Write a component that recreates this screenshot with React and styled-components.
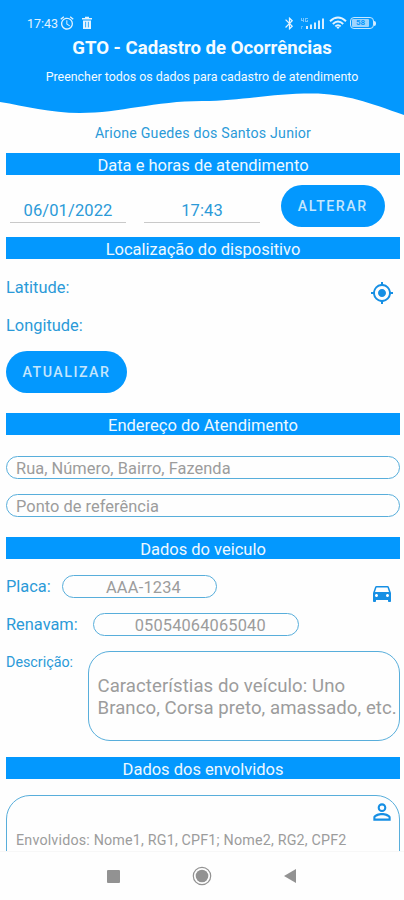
import React from 'react';
import styled, { createGlobalStyle } from 'styled-components';
import {
  MdAlarm,
  MdBluetooth,
  MdDirectionsCar,
  MdMyLocation,
  MdPersonOutline,
} from 'react-icons/md';

const blue = '#0398fe';
const textBlue = '#2b9ad8';
const outline = '#58aedb';
const hint = '#9c9c9c';

const GlobalStyle = createGlobalStyle`
  * {
    box-sizing: border-box;
  }
  body {
    margin: 0;
    background: #fefefe;
    font-family: Roboto, sans-serif;
  }
`;

const Screen = styled.div`
  display: flex;
  flex-direction: column;
  width: 404px;
  height: 900px;
  overflow: hidden;
  background: #fefefe;
`;

const Header = styled.header`
  height: 92px;
  flex: none;
  padding-top: 14px;
  background: ${blue};
  color: #f4fbff;
  text-align: center;
`;

const StatusBar = styled.div`
  display: flex;
  align-items: center;
  justify-content: space-between;
  height: 18px;
  padding: 0 28px 0 27px;
  color: #e3f3ff;
`;

const StatusGroup = styled.div`
  display: flex;
  align-items: center;
  gap: ${(props) => props.$gap}px;
`;

const Clock = styled.span`
  margin-right: -2px;
  font-size: 12.5px;
  font-weight: 400;
`;

const Title = styled.h1`
  margin: 5px 0 0;
  font-size: 18.6px;
  line-height: 22px;
  font-weight: 700;
`;

const Subtitle = styled.p`
  margin: 10px 0 0;
  font-size: 12.4px;
  line-height: 16px;
`;

const Wave = styled.svg`
  display: block;
  flex: none;
  width: 404px;
  height: 24px;
`;

const Form = styled.main`
  flex: 1;
  min-height: 0;
  overflow: hidden;
  padding: 8px 4px 0 6px;
`;

const UserName = styled.p`
  margin: 0 0 11px;
  color: ${textBlue};
  font-size: 14.2px;
  line-height: 18px;
  letter-spacing: 0.2px;
  text-align: center;
`;

const SectionTitle = styled.h2`
  height: 22px;
  margin: 0;
  background: ${blue};
  color: #eef8ff;
  font-size: 16.5px;
  line-height: 25px;
  font-weight: 400;
  text-align: center;
`;

const DateRow = styled.div`
  display: flex;
  align-items: flex-start;
  height: 62px;
  padding: 10px 0 0 4px;
`;

const DateField = styled.div`
  width: 116px;
  height: 38px;
  margin-right: ${(props) => props.$after}px;
  padding-top: 16px;
  border-bottom: 1px solid #c9c9c9;
  color: ${textBlue};
  font-size: 16.5px;
  line-height: 20px;
  letter-spacing: 0.1px;
  text-align: center;
`;

const Button = styled.button`
  width: ${(props) => props.$width}px;
  height: 41.5px;
  padding: 1px 0 0;
  border: 0;
  border-radius: 21px;
  background: ${blue};
  color: #c4e6fd;
  font-family: inherit;
  font-size: 14.2px;
  font-weight: 500;
  letter-spacing: 1.5px;
`;

const Location = styled.div`
  display: flex;
  justify-content: space-between;
  height: 154px;
  padding: 18px 6px 0 0;
`;

const Coordinates = styled.div`
  display: flex;
  flex-direction: column;
  align-items: flex-start;
`;

const Label = styled.label`
  width: ${(props) => (props.$width ? `${props.$width}px` : 'auto')};
  flex: none;
  color: ${textBlue};
  font-size: ${(props) => props.$size || 16.4}px;
  line-height: 22px;
`;

const Coordinate = styled(Label)`
  height: 38px;
`;

const UpdateButton = styled(Button)`
  margin-top: -2px;
`;

const IconSlot = styled.span`
  display: flex;
  align-self: flex-start;
  margin-top: ${(props) => props.$top}px;
  color: #168fe4;
`;

const AddressFields = styled.div`
  display: flex;
  flex-direction: column;
  gap: 15px;
  height: 102px;
  padding-top: 21px;
`;

const Input = styled.input`
  display: block;
  width: ${(props) => (props.$width ? `${props.$width}px` : '100%')};
  height: 23px;
  padding: 1px 0 0 9px;
  border: 1px solid ${outline};
  border-radius: 12px;
  background: transparent;
  font-family: inherit;
  font-size: 16.4px;
  letter-spacing: ${(props) => props.$spacing || 0.04}px;
  text-align: ${(props) => props.$align || 'left'};
  outline: none;

  &::placeholder {
    color: ${hint};
    opacity: 1;
  }
`;

const VehicleTop = styled.div`
  display: flex;
  justify-content: space-between;
  height: 92px;
  padding: 16px 6px 0 0;
`;

const VehicleFields = styled.div`
  display: flex;
  flex-direction: column;
  gap: 15px;
`;

const FieldRow = styled.div`
  display: flex;
  align-items: center;
  height: 23px;
`;

const DescriptionRow = styled.div`
  display: flex;
  align-items: flex-start;
  height: 106px;
`;

const Description = styled.div`
  flex: 1;
  height: 90px;
  padding: 24px 0 0 9px;
  border: 1px solid ${outline};
  border-radius: 22px;
  color: ${hint};
  font-size: 18.6px;
  line-height: 21.5px;
  letter-spacing: 0.07px;
  white-space: pre;
`;

const People = styled.div`
  display: flex;
  justify-content: space-between;
  height: 100px;
  margin-top: 16px;
  padding: 0 4px 0 9px;
  border: 1px solid ${outline};
  border-radius: 24px;
`;

const PeopleHint = styled.p`
  margin: 35px 0 0;
  color: ${hint};
  font-size: 14.3px;
  line-height: 18px;
  letter-spacing: 0.18px;
`;

const NavBar = styled.nav`
  display: flex;
  flex: none;
  align-items: center;
  justify-content: space-between;
  height: 49px;
  padding: 0 108px 0 107px;
  border-top: 1px solid #f7f7f7;
`;

const Trash = styled.svg`
  margin-left: 3px;
`;

const TrashIcon = () => (
  <Trash width="12" height="14" viewBox="0 0 12 14" fill="#e3f3ff">
    <path d="M1 2h3V.8h4V2h3v1.6H1zM2 4.4h8V13H2z" />
    <path d="M4.6 5.8v5.6M7.4 5.8v5.6" stroke={blue} strokeWidth="0.8" />
  </Trash>
);

const SignalIcon = () => (
  <svg width="25" height="14" viewBox="0 0 25 14" fill="#d6edff">
    <path d="M1 2h1v2h1V2h1v4H3V5H1zM5 2h3v1H6v2h1V4h1v2H5z" opacity=".55" />
    <path d="M1 10h2v1H2v2H1z" opacity=".4" />
    <path d="M6 10h2v3H6zM10 8.5h2V13h-2zM14 6.5h2V13h-2zM18 4.5h2V13h-2zM22 2.5h2V13h-2z" />
  </svg>
);

const WifiIcon = () => (
  <svg width="18" height="14" viewBox="0 0 18 14" fill="none" stroke="#e3f3ff" strokeWidth="1.9">
    <path d="M1 5.2Q9-2.4 17 5.2M3.8 8Q9 3.2 14.2 8M6.3 10.4Q9 7.9 11.7 10.4" />
    <path d="M7.4 11.3 9 13l1.6-1.7Q9 10 7.4 11.3" fill="#e3f3ff" stroke="none" />
  </svg>
);

const Battery = styled.span`
  display: flex;
  align-items: center;

  &::after {
    content: '';
    width: 2px;
    height: 5px;
    border-radius: 0 2px 2px 0;
    background: #d6edff;
  }
`;

const BatteryBody = styled.span`
  width: 24px;
  height: 12px;
  padding: 1px;
  border: 1px solid #c9e8ff;
  border-radius: 4px;
`;

const BatteryLevel = styled.span`
  display: block;
  width: 17px;
  height: 8px;
  border-radius: 1px;
  background: #9dd4fd;
  color: ${blue};
  font-size: 8px;
  line-height: 8.5px;
  font-weight: 700;
  text-align: center;
`;

const App = () => (
  <>
    <GlobalStyle />
    <Screen>
      <Header>
        <StatusBar>
          <StatusGroup $gap={3}>
            <Clock>17:43</Clock>
            <MdAlarm size={16} />
            <TrashIcon />
          </StatusGroup>
          <StatusGroup $gap={3.5}>
            <MdBluetooth size={15} />
            <SignalIcon />
            <WifiIcon />
            <Battery>
              <BatteryBody>
                <BatteryLevel>58</BatteryLevel>
              </BatteryBody>
            </Battery>
          </StatusGroup>
        </StatusBar>
        <Title>GTO - Cadastro de Ocorrências</Title>
        <Subtitle>Preencher todos os dados para cadastro de atendimento</Subtitle>
      </Header>
      <Wave viewBox="0 0 404 24">
        <path
          d="M0 0H404V23C370 11 345 1.5 312 1.5C270 1.5 242 9 202 9C155 9 120 21 80 21C50 21 25 14 0 10Z"
          fill={blue}
        />
      </Wave>
      <Form>
        <UserName>Arione Guedes dos Santos Junior</UserName>
        <SectionTitle>Data e horas de atendimento</SectionTitle>
        <DateRow>
          <DateField $after={18}>06/01/2022</DateField>
          <DateField $after={21}>17:43</DateField>
          <Button $width={103.5}>ALTERAR</Button>
        </DateRow>
        <SectionTitle>Localização do dispositivo</SectionTitle>
        <Location>
          <Coordinates>
            <Coordinate>Latitude:</Coordinate>
            <Coordinate>Longitude:</Coordinate>
            <UpdateButton $width={121}>ATUALIZAR</UpdateButton>
          </Coordinates>
          <IconSlot $top={4}>
            <MdMyLocation size={24} />
          </IconSlot>
        </Location>
        <SectionTitle>Endereço do Atendimento</SectionTitle>
        <AddressFields>
          <Input placeholder="Rua, Número, Bairro, Fazenda" />
          <Input placeholder="Ponto de referência" />
        </AddressFields>
        <SectionTitle>Dados do veiculo</SectionTitle>
        <VehicleTop>
          <VehicleFields>
            <FieldRow>
              <Label $width={55.5}>Placa:</Label>
              <Input $width={155} $align="center" $spacing={0.2} placeholder="AAA-1234" />
            </FieldRow>
            <FieldRow>
              <Label $width={86.5}>Renavam:</Label>
              <Input $width={206.5} $align="center" $spacing={0.15} placeholder="05054064065040" />
            </FieldRow>
          </VehicleFields>
          <IconSlot $top={6}>
            <MdDirectionsCar size={24} />
          </IconSlot>
        </VehicleTop>
        <DescriptionRow>
          <Label $width={81.5} $size={14.3}>Descrição:</Label>
          <Description>{'Característias do veículo: Uno\nBranco, Corsa preto, amassado, etc.'}</Description>
        </DescriptionRow>
        <SectionTitle>Dados dos envolvidos</SectionTitle>
        <People>
          <PeopleHint>Envolvidos: Nome1, RG1, CPF1; Nome2, RG2, CPF2</PeopleHint>
          <IconSlot $top={3}>
            <MdPersonOutline size={26} />
          </IconSlot>
        </People>
      </Form>
      <NavBar>
        <svg width="13" height="13">
          <rect width="13" height="13" rx="1" fill="#929292" />
        </svg>
        <svg width="20" height="20" viewBox="0 0 20 20">
          <circle cx="10" cy="10" r="8.7" fill="none" stroke="#929292" strokeWidth="1.2" />
          <circle cx="10" cy="10" r="6.3" fill="#929292" />
        </svg>
        <svg width="12" height="14" viewBox="0 0 12 14">
          <path d="M12 0v14L0 7z" fill="#929292" />
        </svg>
      </NavBar>
    </Screen>
  </>
);

export default App;
